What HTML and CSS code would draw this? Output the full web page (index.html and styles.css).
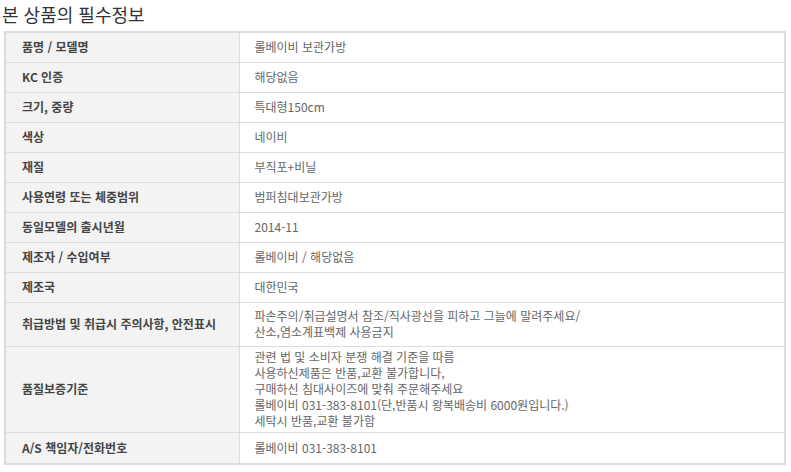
FILE: index.html
```html
<!DOCTYPE html>
<html lang="ko">
<head>
<meta charset="utf-8">
<link rel="stylesheet" href="styles.css">
</head>
<body>
<h2 class="title">본 상품의 필수정보</h2>
<table class="info">
  <tr><th>품명 / 모델명</th><td>롤베이비 보관가방</td></tr>
  <tr><th>KC 인증</th><td>해당없음</td></tr>
  <tr><th>크기, 중량</th><td>특대형150cm</td></tr>
  <tr><th>색상</th><td>네이비</td></tr>
  <tr><th>재질</th><td>부직포+비닐</td></tr>
  <tr><th>사용연령 또는 체중범위</th><td>범퍼침대보관가방</td></tr>
  <tr><th>동일모델의 출시년월</th><td>2014-11</td></tr>
  <tr><th>제조자 / 수입여부</th><td>롤베이비 / 해당없음</td></tr>
  <tr><th>제조국</th><td>대한민국</td></tr>
  <tr class="two"><th>취급방법 및 취급시 주의사항, 안전표시</th><td>파손주의/취급설명서 참조/직사광선을 피하고 그늘에 말려주세요/<br>산소,염소계표백제 사용금지</td></tr>
  <tr class="five"><th>품질보증기준</th><td>관련 법 및 소비자 분쟁 해결 기준을 따름<br>사용하신제품은 반품,교환 불가합니다,<br>구매하신 침대사이즈에 맞춰 주문해주세요<br>롤베이비 031-383-8101(단,반품시 왕복배송비 6000원입니다.)<br>세탁시 반품,교환 불가함</td></tr>
  <tr class="last"><th>A/S 책임자/전화번호</th><td>롤베이비 031-383-8101</td></tr>
</table>
</body>
</html>
```

FILE: styles.css
```css
html, body {
  margin: 0;
  padding: 0;
  background: #fff;
}
body {
  font-family: "Noto Sans CJK KR", "Noto Sans", sans-serif;
  color: #555;
}
.title {
  margin: 0;
  padding: 0 0 0 2px;
  height: 31px;
  font-size: 18px;
  line-height: 28px;
  font-weight: 400;
  color: #333;
}
.info {
  margin-left: 4px;
  width: 782px;
  border-collapse: collapse;
  border: 2px solid #dcdcdc;
  font-size: 12px;
}
.info th,
.info td {
  height: 30px;
  padding: 0 0 0 15px;
  border-top: 1px solid #dcdcdc;
  line-height: 16px;
  text-align: left;
  vertical-align: middle;
  box-sizing: border-box;
}
.info tr:first-child th,
.info tr:first-child td {
  border-top: 0;
}
.info th {
  width: 234px;
  padding-left: 16px;
  background: #f3f3f3;
  border-right: 1px solid #dcdcdc;
  color: #444;
  font-weight: 700;
}
.info td {
  color: #666;
}
.info tr.two th,
.info tr.two td {
  height: 44px;
  padding-top: 5px;
  padding-bottom: 6px;
}
.info tr.five th,
.info tr.five td {
  height: 86px;
  line-height: 16.2px;
  padding-top: 2px;
  padding-bottom: 2px;
}
.info tr.last th,
.info tr.last td {
  height: 32px;
}
```
